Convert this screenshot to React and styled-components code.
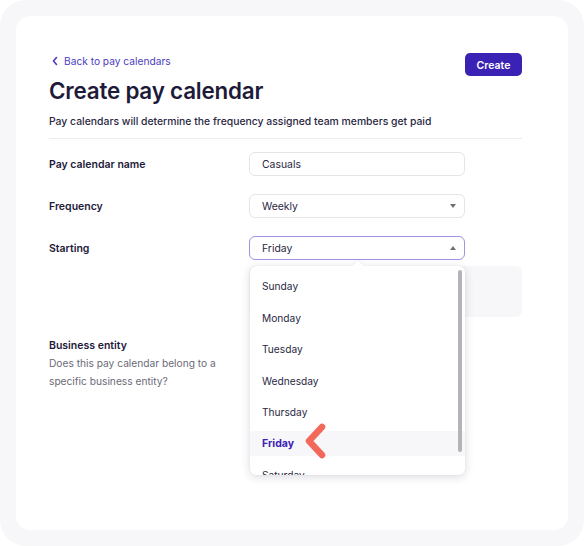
import React from 'react';
import styled, { createGlobalStyle } from 'styled-components';

const colors = {
  ink: '#1d1a3a',
  text: '#2a2742',
  muted: '#6b6a78',
  brand: '#3a22b4',
  link: '#4a3bc0',
  line: '#ececf0',
  field: '#e4e4e9',
  focus: '#9d92e4',
  wash: '#f7f7f9',
  coral: '#f2685a',
};

const days = ['Sunday', 'Monday', 'Tuesday', 'Wednesday', 'Thursday', 'Friday', 'Saturday'];

const GlobalStyle = createGlobalStyle`
  html, body {
    margin: 0;
    padding: 0;
    background: #ffffff;
    font-family: Inter, "Noto Sans", "Liberation Sans", sans-serif;
    -webkit-font-smoothing: antialiased;
  }
`;

const App = () => (
  <>
    <GlobalStyle />
    <Frame>
      <Card>
        <Header>
          <TitleBlock>
            <BackLink>
              <svg width="8" height="10" viewBox="0 0 8 10">
                <path d="M5.5 1.5 L2.5 5 L5.5 8.5" fill="none" stroke={colors.link} strokeWidth="1.6" strokeLinecap="round" strokeLinejoin="round" />
              </svg>
              Back to pay calendars
            </BackLink>
            <Title>Create pay calendar</Title>
            <Subtitle>Pay calendars will determine the frequency assigned team members get paid</Subtitle>
          </TitleBlock>
          <PrimaryButton>Create</PrimaryButton>
        </Header>
        <Divider />
        <Form>
          <Label>Pay calendar name</Label>
          <Field>Casuals</Field>

          <Label>Frequency</Label>
          <Field>
            Weekly
            <Caret />
          </Field>

          <Label>Starting</Label>
          <SelectWrap>
            <Field focused>
              Friday
              <Caret up />
            </Field>
            <Popup>
              <Notch />
              <OptionList>
                {days.map(day => (
                  <Option key={day} selected={day === 'Friday'}>{day}</Option>
                ))}
              </OptionList>
              <ScrollThumb />
              <Pointer width="30" height="40" viewBox="0 0 30 40">
                <path d="M20 6 L7 20 L20 34" fill="none" stroke={colors.coral} strokeWidth="6.5" strokeLinecap="round" strokeLinejoin="round" />
              </Pointer>
            </Popup>
          </SelectWrap>

          <InfoPanel />

          <EntityBlock>
            <Label>Business entity</Label>
            <Help>Does this pay calendar belong to a specific business entity?</Help>
          </EntityBlock>
        </Form>
      </Card>
    </Frame>
  </>
);

const Frame = styled.div`
  box-sizing: border-box;
  width: 584px;
  height: 546px;
  padding: 16px;
  background: ${colors.wash};
  border-radius: 26px;
`;

const Card = styled.div`
  box-sizing: border-box;
  height: 514px;
  padding: 37px 46px 0 33px;
  background: #ffffff;
  border-radius: 14px;
`;

const Header = styled.div`
  display: flex;
  justify-content: space-between;
  align-items: flex-start;
`;

const TitleBlock = styled.div`
  display: flex;
  flex-direction: column;
`;

const BackLink = styled.a`
  display: flex;
  align-items: center;
  gap: 5px;
  padding-left: 2px;
  font-size: 10.2px;
  line-height: 16px;
  color: ${colors.link};
  cursor: pointer;
`;

const Title = styled.h1`
  margin: 8px 0 0;
  font-size: 22.4px;
  line-height: 28px;
  font-weight: 600;
  letter-spacing: -0.2px;
  color: ${colors.ink};
`;

const Subtitle = styled.p`
  margin: 9px 0 0;
  font-size: 10.4px;
  line-height: 16px;
  font-weight: 500;
  color: ${colors.text};
`;

const PrimaryButton = styled.button`
  width: 57px;
  height: 23px;
  padding: 1px 0 0;
  border: none;
  border-radius: 5px;
  background: ${colors.brand};
  color: #ffffff;
  font-family: inherit;
  font-size: 10.5px;
  font-weight: 600;
`;

const Divider = styled.div`
  height: 1px;
  margin-top: 8px;
  background: ${colors.line};
`;

const Form = styled.div`
  display: grid;
  grid-template-columns: 200px 216px 57px;
  row-gap: 18px;
  align-items: center;
  margin-top: 13px;
`;

const Label = styled.div`
  grid-column: 1;
  padding-top: 1px;
  font-size: 10.5px;
  line-height: 16px;
  font-weight: 600;
  color: ${colors.ink};
`;

const Field = styled.div`
  grid-column: 2;
  position: relative;
  box-sizing: border-box;
  display: flex;
  align-items: center;
  height: 24px;
  padding: 0 12px;
  border: 1px solid ${props => (props.focused ? colors.focus : colors.field)};
  border-radius: 6px;
  background: #ffffff;
  font-size: 10.4px;
  color: ${colors.text};
`;

const Caret = styled.span`
  position: absolute;
  right: 8px;
  top: 50%;
  margin-top: -2px;
  width: 0;
  height: 0;
  border-left: 3.5px solid transparent;
  border-right: 3.5px solid transparent;
  ${props => (props.up
    ? 'border-bottom: 4px solid #6f6f78;'
    : 'border-top: 4px solid #6f6f78;')}
`;

const SelectWrap = styled.div`
  grid-column: 2;
  position: relative;
  z-index: 2;
`;

const Popup = styled.div`
  position: absolute;
  top: 30px;
  left: 1px;
  width: 215px;
  height: 209px;
  background: #ffffff;
  border-radius: 6px;
  box-shadow: 0 2px 10px rgba(30, 30, 60, 0.16), 0 0 1px rgba(30, 30, 60, 0.12);
`;

const Notch = styled.div`
  position: absolute;
  top: -4px;
  left: 104px;
  width: 8px;
  height: 8px;
  background: #ffffff;
  transform: rotate(45deg);
  box-shadow: -1px -1px 2px rgba(30, 30, 60, 0.06);
`;

const OptionList = styled.ul`
  position: relative;
  list-style: none;
  margin: 0;
  padding: 7.5px 0 0;
  height: 100%;
  box-sizing: border-box;
  overflow: hidden;
  border-radius: 6px;
  display: flex;
  flex-direction: column;
  gap: 6.5px;
`;

const Option = styled.li`
  flex: 0 0 25px;
  display: flex;
  align-items: center;
  padding: 0 12px;
  font-size: ${props => (props.selected ? '10.5px' : '10.2px')};
  font-weight: ${props => (props.selected ? 700 : 400)};
  color: ${props => (props.selected ? colors.brand : colors.text)};
  background: ${props => (props.selected ? colors.wash : 'transparent')};
`;

const ScrollThumb = styled.div`
  position: absolute;
  top: 4px;
  right: 3px;
  width: 4px;
  height: 182px;
  border-radius: 2px;
  background: #b4b4b8;
`;

const Pointer = styled.svg`
  position: absolute;
  left: 52px;
  top: 155px;
`;

const InfoPanel = styled.div`
  grid-column: 2 / span 2;
  height: 51px;
  margin-top: -12px;
  background: ${colors.wash};
  border-radius: 6px;
`;

const EntityBlock = styled.div`
  grid-column: 1;
  display: flex;
  flex-direction: column;
  gap: 0;
  margin-top: 2px;
`;

const Help = styled.div`
  font-size: 10.2px;
  line-height: 18px;
  color: ${colors.muted};
  max-width: 190px;
`;

export default App;
